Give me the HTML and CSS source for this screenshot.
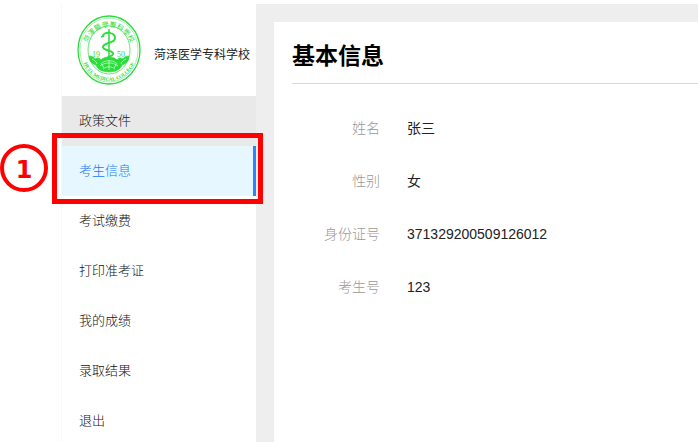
FILE: index.html
```html
<!DOCTYPE html>
<html lang="zh-CN">
<head>
  <meta charset="UTF-8">
  <meta name="viewport" content="width=device-width, initial-scale=1.0">
  <title>基本信息</title>
  <link rel="stylesheet" href="styles.css">
</head>
<body>
  <div class="layout">
    <aside class="sidebar">
      <div class="brand">
        <svg class="logo" viewBox="0 0 64 70" fill="none" stroke="#2bdc3c" aria-hidden="true">
          <defs>
            <path id="arcTop" d="M9 38 A23 26 0 0 1 55 38"/>
            <path id="arcBottom" d="M4 35 A28 31 0 0 0 60 35"/>
          </defs>
          <ellipse cx="32" cy="35" rx="31" ry="34" stroke-width="1.3"/>
          <ellipse cx="32" cy="35" rx="29" ry="32" stroke-width=".4"/>
          <ellipse cx="32" cy="35" rx="21" ry="24" stroke-width=".7"/>
          <g fill="#2bdc3c" stroke="none">
            <text class="logo-cn"><textPath href="#arcTop" startOffset="50%" text-anchor="middle">菏澤醫學專科學校</textPath></text>
            <text class="logo-en"><textPath href="#arcBottom" startOffset="50%" text-anchor="middle">HEZE MEDICAL COLLEGE</textPath></text>
            <text class="logo-year" x="15" y="42">19</text>
            <text class="logo-year" x="40" y="42">50</text>
          </g>
          <path d="M32 14v32" stroke-width="1.5"/>
          <path d="M26 21c1-5 12-4 12 2 0 6-12 4-12 9 0 4 11 3 10 7-1 3-6 2-6 5" stroke-width="2"/>
          <path d="M27 21l-3 1" stroke-width="1.4"/>
          <path d="M12 41c3 0 5 1 6 3 3-2 5-1 6 1 3-4 13-4 16 0 1-2 3-3 6-1 1-2 3-3 6-3 0 5-3 8-7 9-1 4-6 7-13 7s-12-3-13-7c-4-1-7-4-7-9z" fill="#2bdc3c" stroke-width=".6"/>
          <path d="M15 44c2 1 4 2 5 5m29-5c-2 1-4 2-5 5m-19-1c3-3 11-3 14 0m-16 3c5-4 13-4 18 0m-15 3c4-3 8-3 12 0M32 45v10m-8-7l3 5m13-5l-3 5" stroke="#d6ffd6" stroke-width=".7"/>
        </svg>
        <span class="school">菏泽医学专科学校</span>
      </div>
      <nav>
        <ul class="menu">
          <li class="item hover"><a href="#">政策文件</a></li>
          <li class="item active">
            <a href="#">考生信息</a>
            <span class="mark-box"></span>
            <span class="mark-num">1</span>
          </li>
          <li class="item"><a href="#">考试缴费</a></li>
          <li class="item"><a href="#">打印准考证</a></li>
          <li class="item"><a href="#">我的成绩</a></li>
          <li class="item"><a href="#">录取结果</a></li>
          <li class="item"><a href="#">退出</a></li>
        </ul>
      </nav>
    </aside>
    <main class="main">
      <section class="panel">
        <h1>基本信息</h1>
        <dl class="info">
          <dt>姓名</dt><dd>张三</dd>
          <dt>性别</dt><dd>女</dd>
          <dt>身份证号</dt><dd>371329200509126012</dd>
          <dt>考生号</dt><dd>123</dd>
        </dl>
      </section>
    </main>
  </div>
</body>
</html>
```

FILE: styles.css
```css
* { box-sizing: border-box; }
body { margin: 0; background: #fff; font-family: "Liberation Sans", "Noto Sans CJK SC", sans-serif; font-size: 14px; color: #222; }
.layout { display: flex; min-height: 100vh; padding: 4px 0 0 61px; overflow: hidden; }

.sidebar { flex: none; width: 195px; border-left: 1px solid #f8f8f8; }
.brand { display: flex; align-items: center; gap: 13px; height: 92px; padding-left: 15px; }
.logo { flex: none; width: 64px; height: 70px; }
.logo-cn { font: 7px "Noto Sans CJK TC", sans-serif; }
.logo-en { font: bold 5px "Liberation Serif", serif; }
.logo-year { font: 8px "Liberation Serif", serif; }
.school { padding-top: 6px; font-size: 12px; white-space: nowrap; }

.menu { list-style: none; margin: 0; padding: 0; }
.item { position: relative; }
.item a { display: block; padding-left: 17px; line-height: 50px; font-size: 13px; font-weight: 300; color: #111; text-decoration: none; }
.item.hover a { background: #e9e9e9; }
.item.active a { background: #e6f7ff; color: #1677ff; border-right: 3px solid #2b85ff; }

/* step marker */
.mark-box { position: absolute; inset: -13px -7px -8px -10px; border: 5px solid #f00; z-index: 1; pointer-events: none; }
.mark-num { position: absolute; left: -62px; top: -2px; width: 48px; height: 48px; border: 4px solid #f00; border-radius: 50%; color: #f00; font-family: "DejaVu Sans", sans-serif; font-size: 24px; font-weight: bold; line-height: 44px; text-align: center; }

.main { flex: 1; min-width: 0; padding: 18px 0 0 18px; background: #eee; display: flex; }
.panel { flex: 1; min-width: 0; padding: 14px 0 0 18px; background: #fff; }
h1 { margin: 0; padding-bottom: 7px; border-bottom: 1px solid #d9d9d9; font-size: 23px; line-height: 40px; color: #000; }
.info { display: grid; grid-template-columns: 88px 1fr; column-gap: 27px; margin: 18px 0 0; line-height: 53px; }
.info dt { text-align: right; color: #999; font-weight: 300; }
.info dd { margin: 0; }
```
